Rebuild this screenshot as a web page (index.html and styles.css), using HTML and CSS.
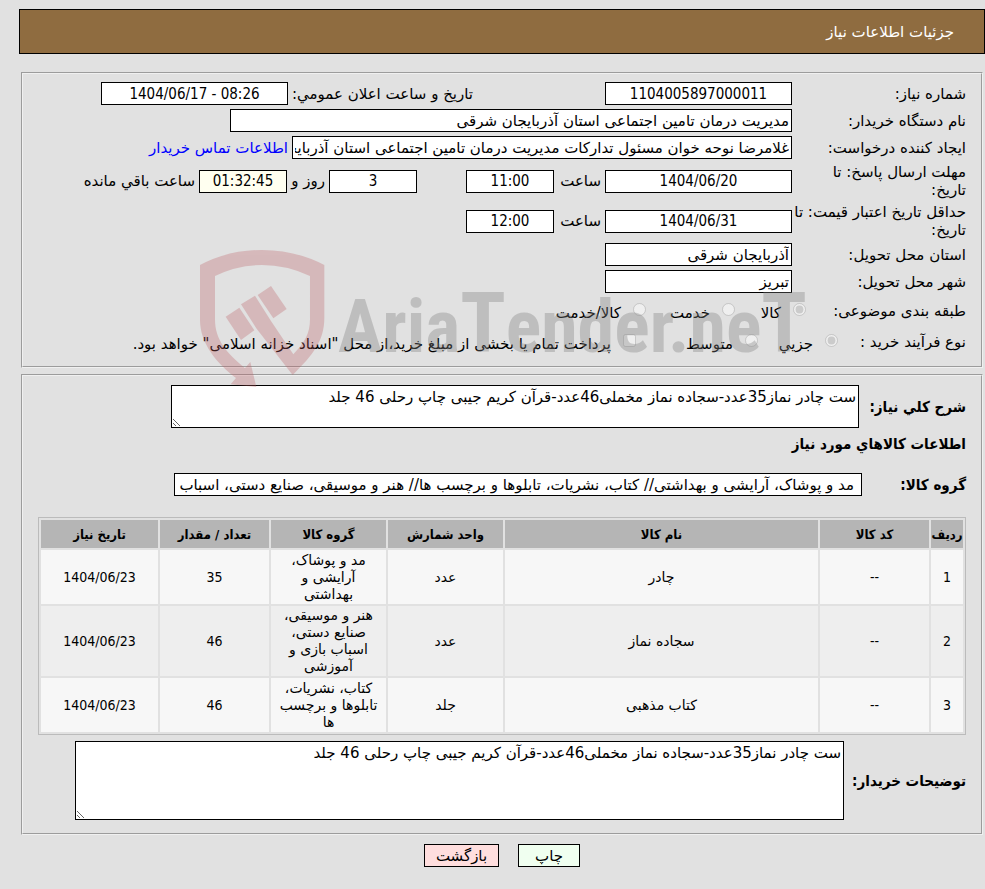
FILE: index.html
```html
<!DOCTYPE html>
<html lang="fa" dir="rtl">
<head>
  <meta charset="UTF-8" />
  <meta name="viewport" content="width=device-width, initial-scale=1.0" />
  <title>جزئیات اطلاعات نیاز</title>
  <link rel="stylesheet" href="styles.css">
</head>

<body>

  <header class="title-bar">جزئیات اطلاعات نیاز</header>

  <main class="content">
    <fieldset class="panel need-info">
      <div class="row">
        <label class="row-label" for="needNo">شماره نیاز:</label>
        <input class="field medium num" type="text" id="needNo" value="1104005897000011" readonly />
        <label class="announce-label" for="announceDate">تاریخ و ساعت اعلان عمومي:</label>
        <input class="field medium num" type="text" id="announceDate" dir="ltr" value="1404/06/17 - 08:26" readonly />
      </div>
      <div class="row">
        <label class="row-label" for="buyer">نام دستگاه خریدار:</label>
        <input class="field buyer" type="text" id="buyer" value="مدیریت درمان تامین اجتماعی استان آذربایجان شرقی" readonly />
      </div>
      <div class="row">
        <label class="row-label" for="creator">ایجاد کننده درخواست:</label>
        <input class="field creator" type="text" id="creator" value="غلامرضا نوحه خوان مسئول تدارکات مدیریت درمان تامین اجتماعی استان آذربایجان شرقی" readonly />
        <a class="contact-link" href="#">اطلاعات تماس خریدار</a>
      </div>
      <div class="row tall">
        <label class="row-label" for="replyDate">مهلت ارسال پاسخ: تا<br />تاریخ:</label>
        <input class="field medium num" type="text" id="replyDate" value="1404/06/20" readonly />
        <label class="hour-label" for="replyHour">ساعت</label>
        <input class="field small num" type="text" id="replyHour" value="11:00" readonly />
        <input class="field small num days" type="text" id="daysLeft" value="3" readonly />
        <label class="day-label" for="daysLeft">روز و</label>
        <input class="field small num timer" type="text" id="timeLeft" value="01:32:45" readonly />
        <label class="left-label" for="timeLeft">ساعت باقي مانده</label>
      </div>
      <div class="row tall">
        <label class="row-label" for="priceDate">حداقل تاریخ اعتبار قیمت: تا<br />تاریخ:</label>
        <input class="field medium num" type="text" id="priceDate" value="1404/06/31" readonly />
        <label class="hour-label" for="priceHour">ساعت</label>
        <input class="field small num" type="text" id="priceHour" value="12:00" readonly />
      </div>
      <div class="row">
        <label class="row-label" for="province">استان محل تحویل:</label>
        <input class="field medium" type="text" id="province" value="آذربایجان شرقی" readonly />
      </div>
      <div class="row">
        <label class="row-label" for="city">شهر محل تحویل:</label>
        <input class="field medium" type="text" id="city" value="تبریز" readonly />
      </div>
      <div class="row options">
        <span class="row-label">طبقه بندی موضوعی:</span>
        <div class="choices subject">
          <label class="choice"><input type="radio" name="subject" checked disabled /><span>کالا</span></label>
          <label class="choice"><input type="radio" name="subject" disabled /><span>خدمت</span></label>
          <label class="choice"><input type="radio" name="subject" disabled /><span>کالا/خدمت</span></label>
        </div>
      </div>
      <div class="row options">
        <span class="row-label process-label">نوع فرآیند خرید :</span>
        <div class="choices process">
          <label class="choice"><input type="radio" name="process" checked disabled /><span>جزیي</span></label>
          <label class="choice"><input type="radio" name="process" disabled /><span>متوسط</span></label>
          <label class="choice"><input type="checkbox" disabled /><span>پرداخت تمام یا بخشی از مبلغ خرید،از محل "اسناد خزانه اسلامی" خواهد بود.</span></label>
        </div>
      </div>

      <svg class="watermark" width="610" height="140" viewBox="0 0 610 140" direction="ltr">
        <g class="mark-shield" transform="translate(-8 -8) scale(0.3333)">
          <path d="M30 75Q115 30 216 30Q317 30 403 75V235C403 300 370 345 308 405L201 268L153 193L195 167L243 243L310 343C345 307 360 280 360 238V108Q290 75 216 75Q142 75 75 108V238C75 300 110 340 165 384L181 366L199 441L122 433L138 414C80 370 30 310 30 240Z" />
          <path d="M107 230L148 203L193 271L153 300Z" />
          <path d="M203 165L243 138L290 207L250 235Z" />
        </g>
        <text class="mark-text" x="140" y="104">Aria<tspan class="mark-big">T</tspan>ender.ne<tspan class="mark-big">T</tspan></text>
      </svg>
    </fieldset>

    <fieldset class="panel goods-info">
      <div class="row summary-row">
        <label class="bold summary-label" for="summary">شرح کلي نیاز:</label>
        <textarea class="summary" id="summary" readonly>ست چادر نماز35عدد-سجاده نماز مخملی46عدد-قرآن کریم جیبی چاپ رحلی 46 جلد</textarea>
      </div>
      <h2 class="bold">اطلاعات کالاهاي مورد نیاز</h2>
      <div class="row group-row">
        <label class="bold group-label" for="group">گروه کالا:</label>
        <input class="field group" type="text" id="group" value="مد و پوشاک، آرایشی و بهداشتی// کتاب، نشریات، تابلوها و برچسب ها// هنر و موسیقی، صنایع دستی، اسباب بازی و آموزشی" readonly />
      </div>

      <table class="goods">
        <colgroup>
          <col class="col-row" />
          <col class="col-code" />
          <col />
          <col class="col-wide" />
          <col class="col-wide" />
          <col class="col-code" />
          <col class="col-date" />
        </colgroup>
        <thead>
          <tr>
            <th>ردیف</th>
            <th>کد کالا</th>
            <th>نام کالا</th>
            <th>واحد شمارش</th>
            <th>گروه کالا</th>
            <th>تعداد / مقدار</th>
            <th>تاریخ نیاز</th>
          </tr>
        </thead>
        <tbody>
          <tr>
            <td class="num">1</td>
            <td class="num">--</td>
            <td>چادر</td>
            <td>عدد</td>
            <td class="group-cell">مد و پوشاک، آرایشی و بهداشتی</td>
            <td class="num">35</td>
            <td class="num">1404/06/23</td>
          </tr>
          <tr>
            <td class="num">2</td>
            <td class="num">--</td>
            <td>سجاده نماز</td>
            <td>عدد</td>
            <td class="group-cell">هنر و موسیقی، صنایع دستی، اسباب بازی و آموزشی</td>
            <td class="num">46</td>
            <td class="num">1404/06/23</td>
          </tr>
          <tr>
            <td class="num">3</td>
            <td class="num">--</td>
            <td>کتاب مذهبی</td>
            <td>جلد</td>
            <td class="group-cell">کتاب، نشریات، تابلوها و برچسب ها</td>
            <td class="num">46</td>
            <td class="num">1404/06/23</td>
          </tr>
        </tbody>
      </table>

      <div class="row notes-row">
        <label class="bold notes-label" for="notes">توضیحات خریدار:</label>
        <textarea class="notes" id="notes" readonly>ست چادر نماز35عدد-سجاده نماز مخملی46عدد-قرآن کریم جیبی چاپ رحلی 46 جلد</textarea>
      </div>
    </fieldset>

    <div class="buttons">
      <button class="print-btn" type="button">چاپ</button>
      <button class="back-btn" type="button">بازگشت</button>
    </div>
  </main>

</body>
</html>
```

FILE: styles.css
```css
* {
  box-sizing: border-box;
}

body {
  margin: 0;
  padding: 9px 0 0 19px;
  background: #e1e1e1;
  color: #000;
  font-family: "DejaVu Sans", sans-serif;
  font-size: 15px;
  line-height: 18px;
}

input,
textarea,
button {
  font: inherit;
  color: inherit;
}

.title-bar {
  height: 45px;
  padding: 0 30px;
  display: flex;
  align-items: center;
  background: #8f6c40;
  border: 1px solid #000;
  color: #fff;
}

.content {
  padding: 18px 2px 0;
}

.panel {
  position: relative;
  min-width: 0;
  margin: 0 0 6px;
  padding: 8px 15px 0;
  border: 2px groove #f0f0f0;
}

.row {
  display: flex;
  align-items: center;
  min-height: 23px;
  margin-bottom: 4px;
}

.tall {
  min-height: 36px;
}

.row-label {
  flex: none;
  width: 174px;
}

.field {
  flex: none;
  height: 23px;
  margin: 0;
  padding: 1px 2px;
  background: #fff;
  border: 1px solid #000;
  border-radius: 0;
}

.num {
  font-family: "DejaVu Sans Condensed", "DejaVu Sans", sans-serif;
  text-align: center;
}

.medium {
  width: 187px;
}

.small {
  width: 88px;
}

.buyer {
  width: 562px;
}

.creator {
  width: 500px;
}

.announce-label {
  width: 185px;
  margin-right: 132px;
  white-space: nowrap;
}

.contact-link {
  margin-right: 4px;
  color: #00f;
  text-decoration: none;
}

.hour-label {
  width: 51px;
  padding-right: 4px;
}

.days {
  margin-right: 49px;
}

.day-label {
  width: 42px;
  padding-right: 4px;
  white-space: nowrap;
}

.left-label {
  padding-right: 4px;
}

.timer {
  background: #fffff0;
}

.options {
  min-height: 27px;
}

.options .row-label {
  width: 160px;
}

.options .process-label {
  width: 128px;
}

.choices {
  display: grid;
}

.subject {
  grid-template-columns: 71px 89px auto;
}

.process {
  grid-template-columns: 80px 122px auto;
}

.choice {
  display: flex;
  align-items: center;
  gap: 12px;
  white-space: nowrap;
}

.choice input {
  flex: none;
  width: 13px;
  height: 13px;
  margin: 0 0 2px;
}

.choice span {
  padding-top: 4px;
}

.need-info {
  padding-bottom: 7px;
}

.watermark {
  position: absolute;
  z-index: 1;
  left: 175px;
  top: 174px;
  pointer-events: none;
}

.mark-shield {
  fill: #bc5c62;
  opacity: 0.3;
}

.mark-text {
  fill: #808080;
  opacity: 0.35;
  font-family: "Roboto Condensed", "Liberation Sans Narrow", "Liberation Sans", sans-serif;
  font-size: 74px;
  font-weight: bold;
}

.mark-big {
  font-size: 84px;
}

.goods-info {
  padding: 9px 15px 0;
}

.bold {
  margin: 0;
  font-family: "DejaVu Sans Condensed", "DejaVu Sans", sans-serif;
  font-size: 15px;
  font-weight: bold;
}

textarea {
  margin: 0;
  padding: 2px;
  background: #fff;
  border: 1px solid #000;
}

.summary-row {
  gap: 4px;
  margin-bottom: 7px;
}

.summary-label {
  width: 103px;
}

.summary {
  width: 688px;
  height: 43px;
}

.group-row {
  margin: 20px 0 21px;
}

.group-label {
  width: 104px;
}

.group {
  width: 688px;
  padding: 1px 7px 1px 2px;
}

.goods {
  width: 100%;
  table-layout: fixed;
  border: 1px solid #bbb;
  border-spacing: 2px;
  text-align: center;
  font-size: 14px;
  line-height: 17px;
}

.goods th {
  height: 28px;
  padding: 0;
  background: #b5b5b5;
  font-family: "DejaVu Sans Condensed", "DejaVu Sans", sans-serif;
  font-size: 13px;
}

.goods td {
  padding: 1px;
  background: #f7f7f7;
}

.goods tbody tr {
  height: 54px;
}

.goods tbody tr:nth-child(even) td {
  background: #eee;
}

.goods td.group-cell {
  padding: 1px 8px;
}

.col-row {
  width: 32px;
}

.col-code {
  width: 109px;
}

.col-wide {
  width: 115px;
}

.col-date {
  width: 117px;
}

.notes-row {
  gap: 5px;
  margin: 6px 0 13px;
}

.notes-label {
  width: 117px;
}

.notes {
  width: 769px;
  height: 79px;
}

.buttons {
  display: flex;
  justify-content: center;
  gap: 19px;
  margin-top: 9px;
}

.buttons button {
  height: 23px;
  padding: 0 8px;
  border: 1px solid #000;
  cursor: pointer;
}

.print-btn {
  min-width: 62px;
  background: #f0fff0;
}

.back-btn {
  min-width: 75px;
  background: #ffdede;
}
```
